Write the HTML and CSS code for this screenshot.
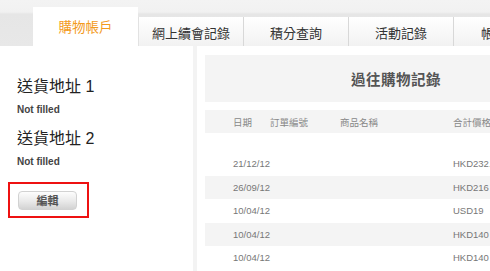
FILE: index.html
```html
<!DOCTYPE html>
<html lang="zh-Hant">
<head>
    <meta charset="UTF-8">
    <meta name="viewport" content="width=device-width, initial-scale=1.0">
    <title>購物帳戶</title>
    <link rel="stylesheet" href="styles.css">
</head>
<body>

    <!-- Tabs -->
    <div class="tabs-bar">
        <div class="tab active">購物帳戶</div>
        <div class="tab">網上續會記錄</div>
        <div class="tab">積分查詢</div>
        <div class="tab">活動記錄</div>
        <div class="tab">帳戶設定</div>
    </div>

    <div class="main">
        <!-- Address sidebar -->
        <div class="sidebar">
            <h2 class="addr-title">送貨地址 1</h2>
            <p class="addr-value">Not filled</p>
            <h2 class="addr-title">送貨地址 2</h2>
            <p class="addr-value">Not filled</p>
            <div class="edit-wrap">
                <button class="edit-btn">編輯</button>
            </div>
        </div>

        <!-- Purchase history -->
        <div class="content">
            <div class="history-title">過往購物記錄</div>
            <div class="row head">
                <span>日期</span>
                <span>訂單編號</span>
                <span>商品名稱</span>
                <span>合計價格</span>
            </div>
            <div class="rows">
                <div class="row"><span>21/12/12</span><span></span><span></span><span>HKD232.00</span></div>
                <div class="row alt"><span>26/09/12</span><span></span><span></span><span>HKD216</span></div>
                <div class="row"><span>10/04/12</span><span></span><span></span><span>USD19</span></div>
                <div class="row alt"><span>10/04/12</span><span></span><span></span><span>HKD140</span></div>
                <div class="row"><span>10/04/12</span><span></span><span></span><span>HKD140</span></div>
            </div>
        </div>
    </div>

</body>
</html>
```

FILE: styles.css
```css
/* General body styling */
body {
    font-family: "Liberation Sans", Arial, "Noto Sans CJK TC", sans-serif;
    margin: 0;
    padding: 0;
    background-color: #fff;
    color: #333;
    width: 490px;
    height: 271px;
    overflow: hidden;
}

/* Tabs styling */
.tabs-bar {
    display: flex;
    align-items: flex-end;
    height: 46px;
    padding-left: 33px;
    background: linear-gradient(#f3f3f3 0, #f1f1f1 12px, #e6e6e6 14px, #e8e8e8 100%);
    white-space: nowrap;
}
.tab {
    flex: 0 0 105px;
    height: 29px;
    display: flex;
    justify-content: center;
    align-items: center;
    padding-top: 2px;
    box-sizing: border-box;
    font-family: "Noto Sans CJK TC", sans-serif;
    font-size: 13px;
    color: #333;
    background: linear-gradient(#ffffff, #f2f2f2);
    border-left: 1px solid #d8d8d8;
    overflow: hidden;
}
.tab.active {
    height: 39px;
    padding-top: 0;
    padding-bottom: 1px;
    background: #fff;
    color: #f39a1c;
    border-left: none;
    font-size: 13.5px;
}
.tab.active + .tab {
    border-left: 1px solid #e2e2e2;
}
.tab:last-child {
    justify-content: flex-start;
    padding-left: 27px;
}

/* Layout */
.main {
    display: flex;
}

/* Sidebar styling */
.sidebar {
    flex: 0 0 197px;
    box-sizing: border-box;
    padding: 31px 0 0 17px;
    height: 225px;
    border-right: 4px solid #f3f3f3;
}
.addr-title {
    margin: 0 0 6px;
    font-size: 16px;
    line-height: 20px;
    font-weight: normal;
    color: #222;
    font-family: "Liberation Sans", Arial, "Noto Sans CJK TC", sans-serif;
}
.addr-value {
    margin: 0 0 12px;
    font-size: 10px;
    line-height: 14px;
    font-weight: bold;
    color: #444;
}
.edit-wrap {
    margin: 13px 0 0 -9px;
    width: 81px;
    height: 36px;
    box-sizing: border-box;
    border: 2px solid #ee1111;
    padding: 7px 0 0 8px;
}
.edit-btn {
    display: block;
    width: 59px;
    height: 19px;
    padding: 0;
    border: 1px solid #d2d2d2;
    border-radius: 4px;
    background: linear-gradient(#fdfdfd, #e9e9e9 55%, #d3d3d3);
    font-family: "Noto Sans CJK TC", sans-serif;
    font-size: 11px;
    font-weight: bold;
    line-height: 17px;
    color: #555;
}

/* Purchase history styling */
.content {
    flex: 0 0 382px;
    margin-left: 8px;
    padding-top: 9px;
}
.history-title {
    height: 47px;
    background-color: #f4f4f4;
    display: flex;
    justify-content: center;
    align-items: center;
    font-family: "Noto Sans CJK TC", sans-serif;
    font-size: 14.5px;
    font-weight: bold;
    letter-spacing: 0.5px;
    color: #555;
}
.row {
    display: grid;
    grid-template-columns: 37px 70px 113px 1fr;
    align-items: center;
    height: 23.5px;
    padding-left: 28px;
    font-size: 9.5px;
    color: #777;
    white-space: nowrap;
}
.row.head {
    margin-top: 8px;
    height: 23px;
    background-color: #f4f4f4;
    font-family: "Noto Sans CJK TC", sans-serif;
    font-size: 9.5px;
    color: #888;
}
.rows {
    margin-top: 19px;
}
.row.alt {
    background-color: #f4f4f4;
}
```
